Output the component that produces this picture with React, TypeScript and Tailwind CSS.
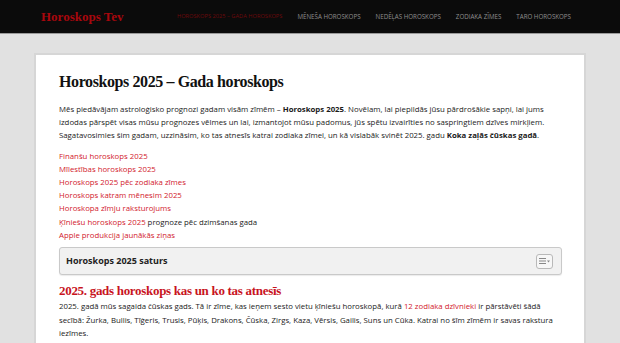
const navItems = ["Mēneša horoskops", "Nedēļas horoskops", "Zodiaka zīmes", "Taro horoskops"];

const links = [
  "Finanšu horoskops 2025",
  "Mīlestības horoskops 2025",
  "Horoskops 2025 pēc zodiaka zīmes",
  "Horoskops katram mēnesim 2025",
  "Horoskopa zīmju raksturojums",
];

const serif = "font-['Liberation_Serif','Times_New_Roman',serif]";

const App = () => {
  return (
    <div className="min-h-[343px] bg-[#e1e1e1] font-['Open_Sans',sans-serif]">
      <header className="h-[34px] bg-[#0b0b0b] border-b border-[#9a9a9a] flex items-center pl-[41px] pr-[49px]">
        <span className={`${serif} text-[#a8070d] font-bold text-[13px]`}>Horoskops Tev</span>
        <nav className="ml-auto flex items-center gap-[15px] text-[6.2px] uppercase text-[#8f8f8f]">
          <span className="text-[#6e0a0c] text-[5.7px]">Horoskops 2025 – Gada horoskops</span>
          {navItems.map((item) => (
            <span key={item}>{item}</span>
          ))}
        </nav>
      </header>

      <div className="pt-[19px] pl-[34px] w-[586px]">
        <main className="bg-white border-2 border-[#d6d6d6] border-b-0 pl-[23px] pr-[22px] pt-[16px] pb-[10px] text-[7.8px] leading-[13.2px] text-[#1a1a1a]">
          <h1 className={`${serif} font-bold text-[16px] leading-[22px] tracking-[-0.4px] text-[#111]`}>
            Horoskops 2025 – Gada horoskops
          </h1>
          <p className="mt-[10px]">
            Mēs piedāvājam astroloģisko prognozi gadam visām zīmēm – <b>Horoskops 2025</b>. Novēlam, lai piepildās jūsu
            pārdrošākie sapņi, lai jums izdodas pārspēt visas mūsu prognozes vēlmes un lai, izmantojot mūsu padomus, jūs
            spētu izvairīties no saspringtiem dzīves mirkļiem. Sagatavosimies šim gadam, uzzināsim, ko tas atnesīs katrai
            zodiaka zīmei, un kā vislabāk svinēt 2025. gadu <b>Koka zaļās čūskas gadā</b>.
          </p>
          <ul className="mt-[7px]">
            {links.map((l) => (
              <li key={l} className="text-[#d2202c]">{l}</li>
            ))}
            <li>
              <span className="text-[#d2202c]">Ķīniešu horoskops 2025</span> prognoze pēc dzimšanas gada
            </li>
            <li className="text-[#d2202c]">Apple produkcija jaunākās ziņas</li>
          </ul>

          <div className="mt-[5px] h-[28px] bg-[#f1f1f1] border border-[#c9c9c9] rounded-[3px] flex items-center pl-[6px] pr-[8px] shadow-[0_1px_1px_rgba(0,0,0,0.08)]">
            <span className="font-bold text-[9px] text-[#222]">Horoskops 2025 saturs</span>
            <button className="ml-auto w-[17px] h-[15px] border border-[#b9b9b9] rounded-[3px] bg-[#f7f7f7] flex items-center justify-center gap-[1px]">
              <svg width="7" height="6" viewBox="0 0 7 6">
                <rect x="0" y="0" width="7" height="1" fill="#888" />
                <rect x="0" y="2.5" width="7" height="1" fill="#888" />
                <rect x="0" y="5" width="7" height="1" fill="#888" />
              </svg>
              <svg width="3" height="3" viewBox="0 0 3 3">
                <path d="M0 0.5 L3 0.5 L1.5 2.5 Z" fill="#888" />
              </svg>
            </button>
          </div>

          <h2 className={`${serif} mt-[7px] font-bold text-[13px] leading-[18px] tracking-[-0.3px] text-[#c8141e]`}>
            2025. gads horoskops kas un ko tas atnesīs
          </h2>
          <p className="mt-[0px] text-[7.8px] leading-[13.5px]">
            2025. gadā mūs sagaida čūskas gads. Tā ir zīme, kas ieņem sesto vietu ķīniešu horoskopā, kurā{" "}
            <span className="text-[#d2202c]">12 zodiaka dzīvnieki</span> ir pārstāvēti šādā secībā: Žurka, Bullis,
            Tīģeris, Trusis, Pūķis, Drakons, Čūska, Zirgs, Kaza, Vērsis, Gailis, Suns un Cūka. Katrai no šīm zīmēm ir savas
            rakstura iezīmes.
          </p>
        </main>
      </div>
    </div>
  );
};

export default App;
